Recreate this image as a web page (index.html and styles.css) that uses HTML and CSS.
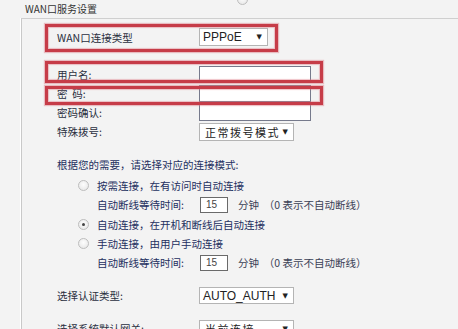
FILE: index.html
```html
<!DOCTYPE html>
<html lang="zh">
<head>
<meta charset="utf-8">
<link rel="stylesheet" href="styles.css">
</head>
<body>
<div class="page">
  <div class="head">
    <span class="title">WAN口服务设置</span>
    <span class="radio cut"></span>
  </div>
  <div class="panel">
    <div class="row first">
      <span class="label">WAN口连接类型</span>
      <span class="select w-ppp"><span class="latin">PPPoE</span><span class="arrow">▼</span></span>
    </div>
    <div class="gap18"></div>
    <div class="row">
      <span class="label">用户名:</span>
      <span class="input"></span>
    </div>
    <div class="row">
      <span class="label">密&nbsp;&nbsp;码:</span>
      <span class="input"></span>
    </div>
    <div class="row">
      <span class="label">密码确认:</span>
      <span class="input"></span>
    </div>
    <div class="row">
      <span class="label">特殊拨号:</span>
      <span class="select w-wide"><span class="cjk">正常拨号模式</span><span class="arrow">▼</span></span>
    </div>
    <div class="row hint">根据您的需要，请选择对应的连接模式:</div>
    <div class="row radio-row"><span class="radio"></span><span>按需连接，在有访问时自动连接</span></div>
    <div class="row sub-row">
      <span class="sublabel">自动断线等待时间:</span>
      <span class="small-input">15</span>
      <span class="unit">分钟&nbsp;&nbsp;（0 表示不自动断线）</span>
    </div>
    <div class="row radio-row"><span class="radio checked"></span><span>自动连接，在开机和断线后自动连接</span></div>
    <div class="row radio-row"><span class="radio"></span><span>手动连接，由用户手动连接</span></div>
    <div class="row sub-row">
      <span class="sublabel">自动断线等待时间:</span>
      <span class="small-input">15</span>
      <span class="unit">分钟&nbsp;&nbsp;（0 表示不自动断线）</span>
    </div>
    <div class="row spaced">
      <span class="label">选择认证类型:</span>
      <span class="select w-wide"><span class="latin">AUTO_AUTH</span><span class="arrow">▼</span></span>
    </div>
    <div class="row spaced">
      <span class="label">选择系统默认网关:</span>
      <span class="select w-wide"><span class="cjk">当前连接</span><span class="arrow">▼</span></span>
    </div>
  </div>
  <div class="mark mark-type"></div>
  <div class="mark mark-user"></div>
  <div class="mark mark-pass"></div>
</div>
</body>
</html>
```
FILE: styles.css
```css
html, body {
  margin: 0;
  padding: 0;
  background: #f3f3f3;
  overflow: hidden;
}
.page {
  position: relative;
  width: 458px;
  height: 329px;
  overflow: hidden;
  font-family: "Noto Sans CJK SC", "Noto Sans", sans-serif;
  font-size: 10.5px;
  color: #2c3550;
}
.head {
  display: flex;
  align-items: flex-start;
  height: 18px;
  padding-left: 25px;
}
.title {
  font-size: 10px;
  line-height: 18px;
  color: #333;
}
.radio.cut {
  margin-left: 140px;
  margin-top: -6px;
}
.panel {
  margin-left: 21px;
  border-left: 1px solid #c9c9c9;
  border-top: 1px solid #cfcfcf;
  box-shadow: -1px 0 0 #fff;
  padding: 8px 0 40px 35px;
  height: 400px;
}
.row {
  display: flex;
  align-items: center;
  height: 19px;
  white-space: nowrap;
}
.row.first {
  height: 20px;
}
.gap18 {
  height: 18px;
}
.label {
  width: 142px;
  flex: none;
  color: #2a2f40;
}
.select {
  display: flex;
  align-items: center;
  justify-content: space-between;
  box-sizing: border-box;
  height: 18px;
  padding: 0 5px 0 3px;
  background: #fff;
  border: 1px solid #b4b4b4;
  color: #222;
}
.w-ppp { width: 69px; }
.w-wide { width: 95px; }
.latin {
  font-family: "Liberation Sans", Arial, sans-serif;
  font-size: 12px;
}
.cjk {
  font-size: 11px;
  letter-spacing: 1.5px;
  padding-left: 2px;
}
.arrow {
  font-size: 7px;
  color: #222;
  font-family: "DejaVu Sans", sans-serif;
}
.input {
  box-sizing: border-box;
  width: 112px;
  height: 17px;
  background: #fff;
  border: 1px solid #767a8c;
}
.row.hint {
  margin-top: 11px;
  height: 24px;
  color: #243060;
}
.radio-row {
  height: 19.3px;
  padding-left: 21px;
  color: #243060;
}
.radio {
  flex: none;
  display: inline-block;
  box-sizing: border-box;
  width: 11px;
  height: 11px;
  border-radius: 50%;
  border: 1px solid #bdbdbd;
  background: radial-gradient(circle at 50% 40%, #fdfdfd 0%, #e4e4e4 100%);
  margin-right: 8px;
  position: relative;
}
.radio.checked::after {
  content: "";
  position: absolute;
  left: 3px;
  top: 3px;
  width: 3px;
  height: 3px;
  border-radius: 50%;
  background: #444;
}
.sub-row {
  height: 19.3px;
  padding-left: 40px;
  color: #243060;
}
.sublabel {
  width: 103px;
  flex: none;
}
.small-input {
  box-sizing: border-box;
  width: 28px;
  height: 16px;
  background: #fff;
  border: 1px solid #6a6a6a;
  font-family: "Liberation Sans", Arial, sans-serif;
  font-size: 10px;
  line-height: 14px;
  padding-left: 5px;
  color: #444;
}
.unit {
  margin-left: 10px;
  color: #3a4055;
}
.row.spaced {
  margin-top: 14px;
  color: #2c3550;
}
.row.spaced .select {
  height: 17px;
}
.mark {
  position: absolute;
  box-sizing: border-box;
  border: 3px solid #c63c48;
  box-shadow: 0 0 1px 1px rgba(220, 120, 130, 0.45), inset 0 0 1px 1px rgba(220, 120, 130, 0.45);
}
.mark-type {
  left: 45px;
  top: 24px;
  width: 233px;
  height: 28px;
}
.mark-user {
  left: 45px;
  top: 61px;
  width: 278px;
  height: 22px;
}
.mark-pass {
  left: 45px;
  top: 86px;
  width: 278px;
  height: 19px;
}
```
